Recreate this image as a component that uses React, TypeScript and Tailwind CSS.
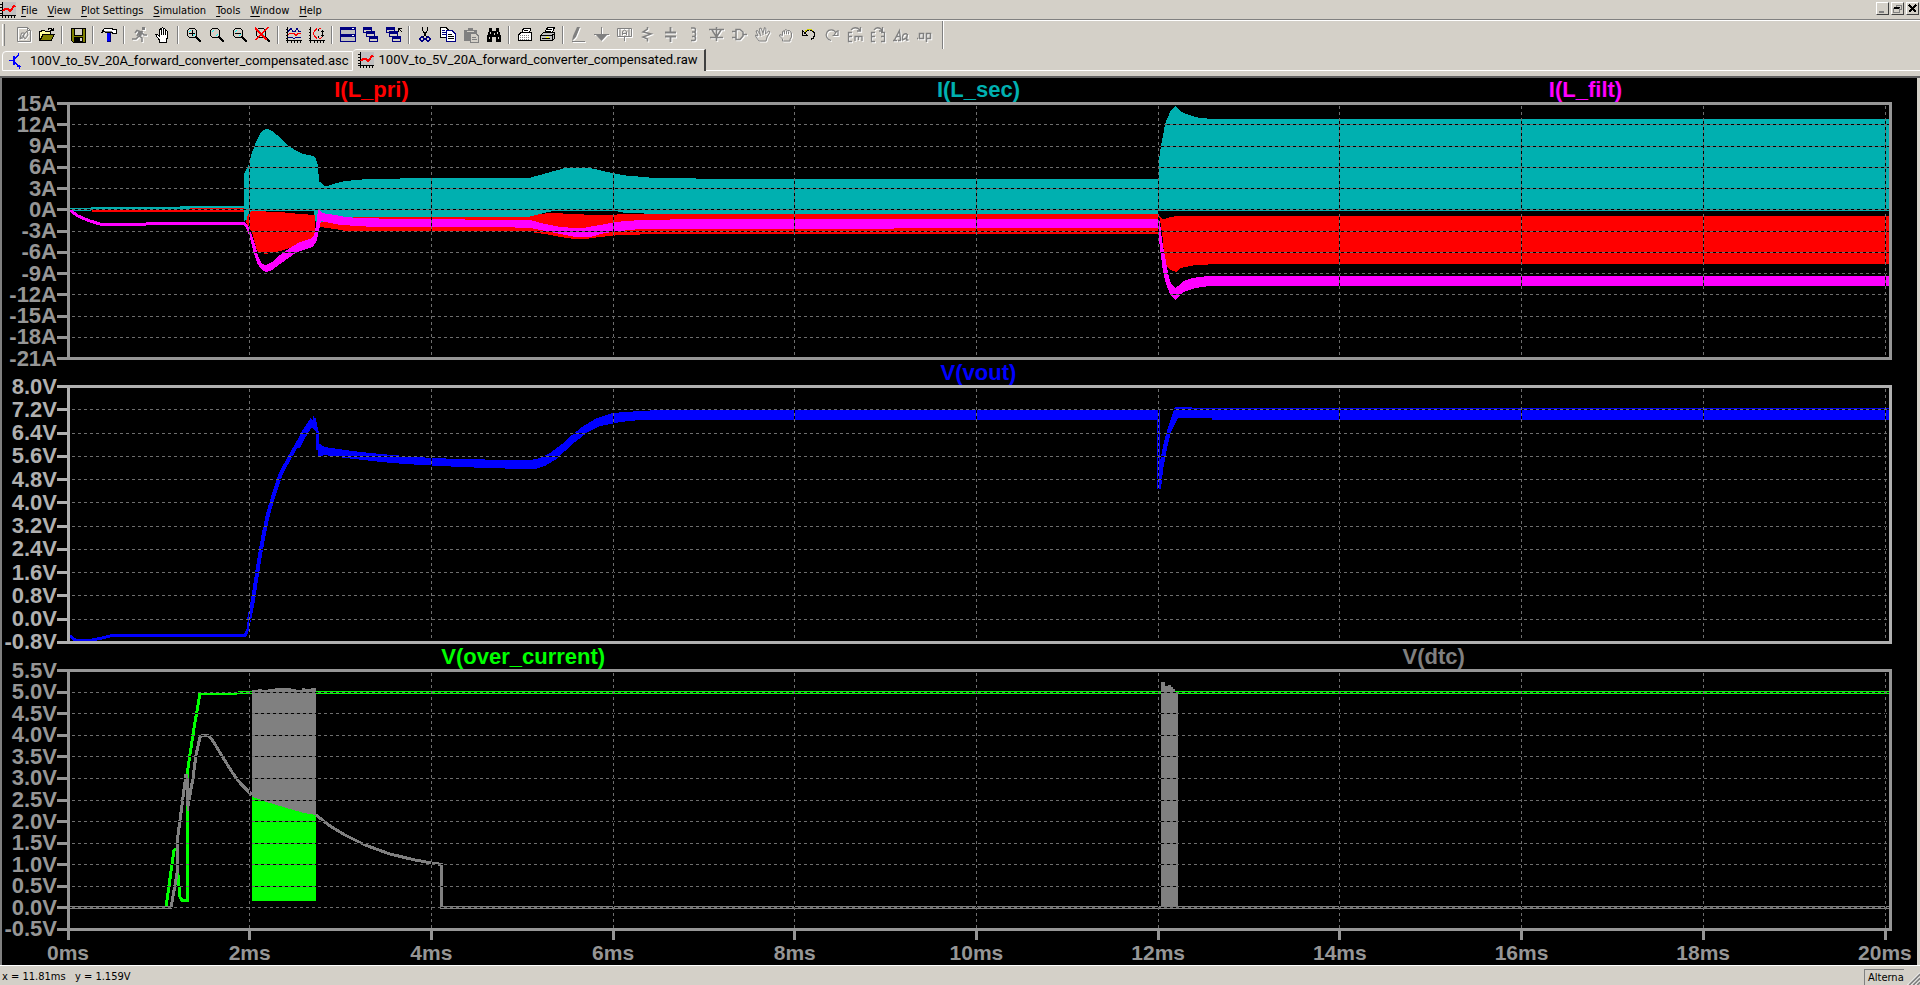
import React from "react";

type Pt = [number, number];

const pts = (list: Pt[]) => list.map(([x, y]) => `${x},${y}`).join(" ");

/* ---------- small drawing helpers ---------- */

function Icon({ children, label }: { children: React.ReactNode; label?: string }) {
  return (
    <svg
      viewBox="0 0 16 16"
      className="h-4 w-4 shrink-0"
      fill="none"
      shapeRendering="crispEdges"
      aria-hidden={label ? undefined : true}
      aria-label={label}
    >
      {children}
    </svg>
  );
}

/* Greyed-out glyph with the white engraved edge of a disabled toolbar button. */
function Engraved({ d, fill, width = 1 }: { d: string; fill?: string; width?: number }) {
  return (
    <svg viewBox="0 0 16 16" className="h-4 w-4 shrink-0 overflow-visible" fill="none" aria-hidden>
      <g transform="translate(1 1)" stroke="#fff" strokeWidth={width}>
        <path d={d} />
        {fill && <path d={fill} fill="#fff" stroke="none" />}
      </g>
      <g stroke="#808080" strokeWidth={width}>
        <path d={d} />
        {fill && <path d={fill} fill="#808080" stroke="none" />}
      </g>
    </svg>
  );
}

function WaveIcon() {
  return (
    <Icon>
      <rect x="2" y="0" width="14" height="13" fill="#c0c0c0" />
      <path d="M2.500 0V16M0 13.500H16M0 2.500H2M0 5.500H2M0 8.500H2M0 11.500H2M5.500 14V16M8.500 14V16M11.500 14V16M14.500 14V16" stroke="#000" />
      <path d="M3 9L5 6.500H8L10 9L12 7L13 4.500L15.500 3.500" stroke="#f00" strokeWidth="2" />
    </Icon>
  );
}

function TransistorIcon() {
  return (
    <Icon>
      <path d="M0 7.500H4" stroke="#00f" />
      <path d="M5 3V12" stroke="#00f" strokeWidth="2" />
      <path d="M6 5.500L9.500 2V0M6 9.500L10.500 14M10.500 11.500V15.500M8 13.500H12" stroke="#00f" />
    </Icon>
  );
}

function Lens({ children }: { children?: React.ReactNode }) {
  return (
    <Icon>
      <path d="M10 10L15 15" stroke="#000" strokeWidth="2.400" />
      <circle cx="6" cy="6" r="5" fill="#d4d0c8" stroke="#000" />
      <path d="M3 5L5 3M7 9L9 7" stroke="#0ff" />
      {children}
    </Icon>
  );
}

function Windows({ arrow }: { arrow?: boolean }) {
  const box = (x: number, y: number) => (
    <g key={x}>
      <rect x={x + 0.5} y={y + 0.5} width="8" height="5" fill="#d4d0c8" stroke="#000080" />
      <rect x={x} y={y} width="9" height="3" fill="#000080" />
    </g>
  );
  return (
    <Icon>
      {box(0, 0)}
      {box(3, 4)}
      {box(6, 9)}
      {arrow && <path d="M12.500 5V1.500H16M12 1L16 5" stroke="#000" />}
    </Icon>
  );
}

/* ---------- toolbar ---------- */

type Tool = { name: string; off?: boolean; icon: React.ReactNode } | "sep";

const tools: Tool[] = [
  {
    name: "New Schematic",
    off: true,
    icon: <Engraved d="M1.500 .5H11.500L14.500 3.500V14.500H1.500ZM11.500 .5V3.500H14.500M4 11.500L5.500 6H8.500L7 11ZM4 12L11 4L12 8L9 12L7 8" />,
  },
  {
    name: "Open",
    icon: (
      <Icon>
        <path d="M0.500 13.500V4.500H2L3 3.500H5.500L6.500 4.500H11.500V7" fill="#ff9" stroke="#000" />
        <path d="M1 13.500L4 7.500H15.500L12 13.500Z" fill="#808000" stroke="#000" />
        <path d="M9 2.500C10 0.500 12 0.500 13.500 3M14.500 0.500V4M11 3.500H15" stroke="#000" />
      </Icon>
    ),
  },
  "sep",
  {
    name: "Save",
    icon: (
      <Icon>
        <path d="M1 1H15V15H3L1 13Z" fill="#808000" stroke="#000" />
        <rect x="4" y="1" width="8" height="7" fill="#d4d0c8" stroke="#000" />
        <rect x="4" y="10" width="9" height="5" fill="#000" />
        <rect x="10" y="11" width="2" height="3" fill="#d4d0c8" />
      </Icon>
    ),
  },
  "sep",
  {
    name: "Control Panel",
    icon: (
      <Icon>
        <path d="M8 6V15" stroke="#00f" strokeWidth="4" />
        <path d="M9.500 6V15M6 14.500H10" stroke="#000080" />
        <path d="M.5 5.500L3.500 1.500H10.500L12.500 2.500H15.500V6.500H12.500L10.500 5.500H5.500L3.500 4.500Z" fill="#fff" stroke="#000" />
        <path d="M4 4.500H11" stroke="#808080" />
      </Icon>
    ),
  },
  "sep",
  {
    name: "Run",
    off: true,
    icon: (
      <Engraved
        d="M10 4L7 9L10 11V15M8 8L4 12H0M3 6L5 3.500L9 5L12 8H15M7 5L5 9"
        fill="M10 0H13V3H10ZM7 4L11 4L9 10L6 8Z"
        width={1.5}
      />
    ),
  },
  {
    name: "Halt",
    icon: (
      <Icon>
        <path
          d="M4.500 15.500V13L1.500 9.500L1 7.500L2.500 7.500L4.500 9V3L5.500 2L6.500 3V1.500L7.500 .5L8.500 1.500V2.500L9.500 1.500L10.500 2.500V4L11.500 3.500L12.500 4.500V10L11.500 13V15.500Z"
          fill="#fff"
          stroke="#000"
        />
        <path d="M6.500 3V8M8.500 2V8M10.500 4V8" stroke="#000" />
      </Icon>
    ),
  },
  "sep",
  { name: "Zoom In", icon: <Lens><path d="M3 6H9M6 3V9" stroke="#000" /></Lens> },
  { name: "Pan", icon: <Lens /> },
  { name: "Zoom Out", icon: <Lens><path d="M3 6H9" stroke="#000" /></Lens> },
  { name: "Zoom Full Extents", icon: <Lens><path d="M0 1L12 13M13 0L1 13" stroke="#f00" strokeWidth="1.500" /></Lens> },
  "sep",
  {
    name: "Autorange",
    icon: (
      <Icon>
        <path d="M1.500 0V16M0 13.500H16M0 2.500H2M0 5.500H2M0 8.500H2M0 11.500H2M5.500 14V16M8.500 14V16M11.500 14V16M14.500 14V16" stroke="#000" />
        <path d="M2 4.500L5 1.500L7 4.500H9L11 1L13 4.500H15M2 10.500H6L8 11.500L10 10.500H15" stroke="#000080" />
        <path d="M2 7.500L4 6.500H8L10 8.500L12 6.500H15" stroke="#f00" />
      </Icon>
    ),
  },
  {
    name: "Zoom Axis",
    icon: (
      <Icon>
        <path d="M1.500 0V16M0 13.500H16M0 2.500H2M0 5.500H2M0 8.500H2M0 11.500H2M5.500 14V16M8.500 14V16M11.500 14V16M14.500 14V16" stroke="#000" />
        <path d="M13.500 3V10M12 4.500H15M12 8.500H15M9.500 2V4M9.500 9V11" stroke="#000" />
        <path d="M8 1.500L5.500 4L4.500 6.500L5.500 9L8 11.500M10 1.500H11.500L12.500 2.500M10 11.500H11.500L12.500 10.500" stroke="#f00" />
      </Icon>
    ),
  },
  "sep",
  {
    name: "Tile",
    icon: (
      <Icon>
        <rect x="0.500" y="0.500" width="15" height="14" fill="#c0c0c0" stroke="#000080" />
        <path d="M0 1.500H16M0 8.500H16" stroke="#000080" strokeWidth="3" />
        <path d="M12 1.500H14M12 8.500H14" stroke="#fff" />
      </Icon>
    ),
  },
  { name: "Cascade", icon: <Windows /> },
  { name: "Close All", icon: <Windows arrow /> },
  "sep",
  {
    name: "Cut",
    icon: (
      <Icon>
        <path d="M5.500 0V3L9.500 10M10.500 0V3L6.500 10" stroke="#000" strokeWidth="1.200" />
        <circle cx="5" cy="12" r="2" stroke="#000080" strokeWidth="1.300" />
        <circle cx="11" cy="12" r="2" stroke="#000080" strokeWidth="1.300" />
      </Icon>
    ),
  },
  {
    name: "Copy",
    icon: (
      <Icon>
        <path d="M0.500 0.500H6L8.500 3V10.500H0.500Z" fill="#fff" stroke="#000" />
        <path d="M2 3.500H5M2 5.500H6M2 7.500H6" stroke="#000080" />
        <path d="M6.500 3.500H12L15.500 7V14.500H6.500Z" fill="#fff" stroke="#000080" />
        <path d="M8 7.500H12M8 9.500H14M8 11.500H14" stroke="#000" />
      </Icon>
    ),
  },
  {
    name: "Paste",
    off: true,
    icon: (
      <Icon>
        <path d="M1 3H5V1H10V3H14V14H1Z" fill="#808080" />
        <path d="M4 4.500H11" stroke="#d4d0c8" />
        <path d="M7.500 6.500H13L15.500 9V15.500H7.500Z" fill="#d4d0c8" stroke="#808080" />
        <path d="M9 10.500H13M9 12.500H14" stroke="#808080" />
      </Icon>
    ),
  },
  {
    name: "Find",
    icon: (
      <Icon>
        <path d="M3 1H6V4H10V1H13V4L15 9V15H10V10H6V15H1V9L3 4Z" fill="#000" />
        <path d="M4.500 5V7M11.500 5V7M3.500 10V12M12.500 10V12M8 6V8" stroke="#d4d0c8" />
      </Icon>
    ),
  },
  "sep",
  {
    name: "Print Setup",
    icon: (
      <Icon>
        <path d="M4.500 6L6.500 1.500H13.500L12.500 6" fill="#fff" stroke="#000" />
        <path d="M1.500 8L4 5.500H14.500V13.500H1.500Z" fill="#fff" stroke="#000" />
        <path d="M3 8.500H13M3 10.500H13M3 12.500H13" stroke="#808080" strokeDasharray="1 1" />
        <path d="M7 3.500H11" stroke="#000" />
      </Icon>
    ),
  },
  {
    name: "Print",
    icon: (
      <Icon>
        <path d="M4.500 6L7.500 .5H14.500L12.500 5" fill="#fff" stroke="#000" />
        <path d="M7 2.500H12M6 4.500H11" stroke="#000" />
        <path d="M.5 8.500L3.500 5.500H14.500V11.500L12.500 13.500H.5Z" fill="#c0c0c0" stroke="#000" />
        <path d="M1 8.500H12L15 6M12.500 9V13M2 11.500H10" stroke="#000" />
        <path d="M6 10.500H9" stroke="#ff0" />
      </Icon>
    ),
  },
  "sep",
  { name: "Wire", off: true, icon: <Engraved d="M1 14.500H14M2.500 12L7.500 2" fill="M6 0H9L5 10L1 14L2 9Z" /> },
  { name: "Ground", off: true, icon: <Engraved d="M7.500 0V7M0 7.500H15" fill="M1 7H14L7.500 14Z" /> },
  { name: "Label Net", off: true, icon: <Engraved d="M.5 1.500H14.500V9.500H.5ZM7.500 10V14M5.500 8V4.500L7.500 3L9.500 4.500V8M5.500 6.500H9.500M3 9V2M12 9V2" /> },
  { name: "Resistor", off: true, icon: <Engraved d="M7.500 0V2L3 5L11 7L3 10L7.500 12V14.500" width={1.5} /> },
  { name: "Capacitor", off: true, icon: <Engraved d="M7.500 0V5M7.500 10V15M2 5.500H13M2 9.500H13" width={1.8} /> },
  { name: "Inductor", off: true, icon: <Engraved d="M5 1H8C10 1 10 5 8 5H6M8 5C10 5 10 9.500 8 9.500H6M8 9.500C10 9.500 10 13.500 8 13.500H5" width={1.5} /> },
  { name: "Diode", off: true, icon: <Engraved d="M7.500 0V14M0 2.500H15M1 10.500H14M3 3L7.500 10L12 3" width={1.5} /> },
  { name: "Component", off: true, icon: <Engraved d="M4 2.500H8L11 5V9L8 12.500H4ZM0 4.500H4M0 10.500H4M11 7.500H15" width={1.5} /> },
  {
    name: "Move",
    off: true,
    icon: <Engraved d="M4 14L1 10L.5 8L3 9L1 4L2.500 3.500L5 7L4.500 1.500L6 1L8 6L9.500 .5L11 1.500L10.500 7L13.500 4L15 5L12 10L11 14ZM5 7L6 9M8 6V8" />,
  },
  {
    name: "Drag",
    off: true,
    icon: <Engraved d="M4.500 14V12L1.500 9L2 7.500L4.500 8.500V4.500L6.500 3.500L7.500 2.500L9.500 3.500L11.500 3.500L13.500 6V10L12 12V14ZM6.500 4V7M8.500 4V7M10.500 4.500V7" />,
  },
  {
    name: "Undo",
    icon: (
      <Icon>
        <path d="M3 6.500C5 2.500 10 1.500 12.500 4.500C15 8 13 11.500 10 12.500" stroke="#000" strokeWidth="1.300" />
        <path d="M4 4.500C6 2 10 1.500 12 4" stroke="#cc0" />
        <path d="M1.500 3V8.500H7M2 4L6 8" stroke="#000" strokeWidth="1.300" />
      </Icon>
    ),
  },
  { name: "Redo", off: true, icon: <Engraved d="M12 6C10 2 5 2 3 5C1 9 3 12 7 13.500M14 3V8.500H8.500M13 4L10 8" width={1.2} /> },
  { name: "Rotate", off: true, icon: <Engraved d="M5 5.500H1.500V14.500H5M1.500 9.500H5M8 14V9.500H15V14M11.500 10V13M4 3C6 0 10 0 13 3M13.500 0V4H10" width={1.3} /> },
  { name: "Mirror", off: true, icon: <Engraved d="M5 5.500H1.500V14.500H5M1.500 9.500H5M11 5.500H14.500V14.500H11M14.500 9.500H11M4 3C6 0 9 0 12 3M12.500 0V4H9" width={1.3} /> },
  { name: "Text", off: true, icon: <Engraved d="M0 13.500H4M5 13.500H8M1.500 13L6.500 3.500L7.500 13M3 9.500H7M14 7C10 6 9 9 9.500 13L13.500 11L14.500 7L13.500 13H15.500" width={1.4} /> },
  { name: "SPICE Directive", off: true, icon: <Engraved d="M1 11.500H2M3.500 6.500H7.500V11.500H3.500ZM10.500 15V6.500H14.500V11.500H10.500" width={1.5} /> },
];

function Toolbar() {
  return (
    <div role="toolbar" aria-label="Main" className="flex h-7 items-stretch">
      <div className="mt-[3px] mr-[7px] ml-0.5 h-[22px] w-[3px] border-r border-l border-r-[#808080] border-l-white" />
      {tools.map((t, i) =>
        t === "sep" ? (
          <div key={i} className="flex w-2 items-center justify-center">
            <div className="h-[18px] w-0.5 border-r border-l border-r-white border-l-[#808080]" />
          </div>
        ) : (
          <button
            key={i}
            type="button"
            aria-label={t.name}
            title={t.name}
            disabled={t.off}
            className="flex w-[23px] items-center justify-center"
          >
            {t.icon}
          </button>
        ),
      )}
      <div className="ml-[7px] w-0.5 border-r border-l border-r-white border-l-[#808080]" />
    </div>
  );
}

/* ---------- menu, tabs ---------- */

const menus = ["File", "View", "Plot Settings", "Simulation", "Tools", "Window", "Help"];

function CaptionButton({ label, children }: { label: string; children: React.ReactNode }) {
  return (
    <button
      type="button"
      aria-label={label}
      className="flex h-[13px] w-[13px] items-center justify-center border border-t-white border-r-[#404040] border-b-[#404040] border-l-white bg-[#d4d0c8]"
    >
      <svg viewBox="0 0 9 9" className="h-[9px] w-[9px]" fill="none" shapeRendering="crispEdges" aria-hidden>
        {children}
      </svg>
    </button>
  );
}

function MenuBar() {
  return (
    <header className="flex h-5 items-center border-b border-[#808080] text-[11px] leading-4">
      <WaveIcon />
      <nav className="ml-[5px] flex gap-2.5">
        {menus.map((m) => (
          <button key={m} type="button" className="pt-0.5 whitespace-nowrap">
            <span className="underline underline-offset-2">{m[0]}</span>
            {m.slice(1)}
          </button>
        ))}
      </nav>
      <div className="mr-px ml-auto flex gap-0.5 self-start pt-0.5">
        <CaptionButton label="Minimize">
          <path d="M1 8H6" stroke="#808080" strokeWidth="2" />
        </CaptionButton>
        <CaptionButton label="Restore">
          <path d="M3.500 3V1.500H8.500V5.500H7" stroke="#808080" />
          <path d="M.5 4H6.500" stroke="#000" strokeWidth="2" />
          <path d="M.5 4V8.500H6.500V4" stroke="#808080" />
        </CaptionButton>
        <CaptionButton label="Close">
          <path d="M1 1L8 8M8 1L1 8" stroke="#000" strokeWidth="1.600" />
        </CaptionButton>
      </div>
    </header>
  );
}

function Tabs() {
  return (
    <div role="tablist" className="flex h-[22px] items-end text-[13px] leading-4 [font-family:Roboto,sans-serif]">
      <button
        type="button"
        role="tab"
        aria-selected="false"
        className="ml-0.5 flex h-5 items-center rounded-tl-sm border border-white pr-[3px] pl-1.5 whitespace-nowrap"
      >
        <TransistorIcon />
        <span className="ml-[5px]">100V_to_5V_20A_forward_converter_compensated.asc</span>
      </button>
      <button
        type="button"
        role="tab"
        aria-selected="true"
        className="flex h-[22px] items-center rounded-tl-sm border-t border-r-2 border-t-white border-r-[#404040] pb-0.5 pl-[5px] pr-1.5 whitespace-nowrap"
      >
        <WaveIcon />
        <span className="ml-[5px]">100V_to_5V_20A_forward_converter_compensated.raw</span>
      </button>
      <div className="flex-1 border-b border-white" />
    </div>
  );
}

/* ---------- plot panes ---------- */

const LEFT = 68.5;
const MS = 90.85;
const RIGHT = 1890.5;
const timeTicks = Array.from({ length: 11 }, (_, i) => i * 2);
const snap = (v: number) => Math.floor(v) + 0.5;

interface PaneProps {
  name: string;
  legend: { text: string; tone: string }[];
  labels: string[];
  top: number;
  bottom: number;
  frame: string;
  tone: string;
  size: string;
  timeAxis?: boolean;
  children: React.ReactNode;
}

function Pane({ name, legend, labels, top, bottom, frame, tone, size, timeAxis, children }: PaneProps) {
  const rows = labels.map((_, i) => snap(top + ((bottom - top) * i) / (labels.length - 1)));
  const y0 = top - 1.5;
  const height = bottom - top + (timeAxis ? 12 : 3);
  return (
    <section aria-label={name} className={`flex min-h-0 flex-col ${size}`}>
      <div className="flex h-6 shrink-0 items-center pr-7 pl-[66px]">
        {legend.map((l) => (
          <button key={l.text} type="button" className={`flex-1 text-center leading-6 font-bold ${l.tone}`}>
            {l.text}
          </button>
        ))}
      </div>
      <div className="flex min-h-0 flex-1">
        <ul className={`flex w-[55px] shrink-0 flex-col items-end justify-between pt-px ${timeAxis ? "pb-[11px]" : "pb-0.5"} ${tone}`}>
          {labels.map((l) => (
            <li key={l} className="flex h-0 items-center whitespace-nowrap">
              {l}
            </li>
          ))}
        </ul>
        <svg
          viewBox={`57 ${y0} 1835 ${height}`}
          preserveAspectRatio="none"
          className="mr-[25px] h-full w-0 min-w-0 flex-1"
          fill="none"
          shapeRendering="crispEdges"
          role="img"
          aria-label={`${name} against time`}
        >
          {children}
          {rows.slice(1, -1).map((y) => (
            <g key={y}>
              <path d={`M70 ${y}H1889`} stroke="#000" />
              <path d={`M72 ${y}H1889`} stroke="#6e6e6e" strokeDasharray="3 3" />
            </g>
          ))}
          {timeTicks.slice(1).map((t) => {
            const x = snap(LEFT + t * MS - 0.4);
            return (
              <g key={t}>
                <path d={`M${x} ${top + 2}V${bottom - 1}`} stroke="#000" />
                <path d={`M${x} ${top + 2}V${bottom - 1}`} stroke="#6e6e6e" strokeDasharray="3 3" />
              </g>
            );
          })}
          <g stroke={frame} strokeWidth="3">
            <rect x={LEFT} y={top} width={RIGHT - LEFT} height={bottom - top} />
            {rows.map((y) => (
              <path key={y} d={`M57 ${y}H68`} />
            ))}
            {timeAxis && timeTicks.map((t) => <path key={t} d={`M${snap(LEFT + t * MS - 0.4)} ${bottom}V${bottom + 10}`} />)}
          </g>
        </svg>
      </div>
    </section>
  );
}

const secondary: Pt[] = [
  [244, 174], [247, 168], [250, 162], [251, 155], [254, 148], [256, 142], [259, 136], [262, 131], [265, 129.5],
  [268, 129], [272, 131], [277, 135], [283, 141], [290, 147], [297, 151], [303, 154], [313, 156], [316, 159],
  [318, 166], [319, 182], [322, 183], [324, 186], [327, 186], [333, 184], [343, 181.5], [355, 180], [369, 179],
  [431, 178], [529, 178], [547, 173], [565, 168], [590, 168], [612, 173], [626, 175.5], [655, 178], [696, 178.5],
  [720, 179], [1158, 179], [1159, 160], [1161, 145], [1163, 136], [1165, 124], [1168, 117], [1171, 110],
  [1174, 107], [1176, 106], [1179, 110], [1184, 113], [1192, 116], [1200, 118], [1214, 119], [1889, 119],
  [1889, 211], [1159, 211], [1158, 214], [662, 214], [625, 213], [616, 211], [553, 211], [540, 214], [528, 217],
  [355, 217], [330, 222], [319, 226], [315, 220], [314, 211], [251, 211], [248, 219], [244, 221],
];

const primaryStart: Pt[] = [
  [246, 222], [248, 214], [251, 211], [280, 212], [300, 214], [315, 215], [315, 238], [306, 242], [290, 248],
  [280, 251], [265, 254], [257, 251], [252, 232],
];

const primaryMid: Pt[] = [
  [320, 222], [345, 220], [355, 217], [528, 217], [540, 214], [550, 213], [575, 214], [593, 215], [640, 214],
  [1158, 214], [1158, 234], [640, 234.5], [615, 235.5], [600, 237], [585, 239], [575, 239], [560, 237], [545, 234],
  [530, 232], [369, 232], [345, 231], [335, 229], [320, 227],
];

const primaryEnd: Pt[] = [
  [1159, 215], [1162, 219], [1165, 219], [1170, 217], [1178, 216], [1889, 216], [1889, 264], [1220, 264],
  [1195, 265], [1180, 268], [1176, 272], [1171, 270], [1166, 266], [1164, 256], [1163, 240], [1161, 226],
];

const filter: Pt[] = [
  [244, 222], [248, 226], [251, 232], [255, 244], [258, 256], [262, 264], [266, 265], [272, 262], [280, 255],
  [290, 248], [300, 242], [310, 239], [314, 235], [316, 226], [317, 218], [318, 210], [320, 210], [322, 213],
  [335, 215], [345, 217], [358, 218], [400, 219], [530, 220], [545, 224], [560, 227], [575, 228], [583, 228],
  [600, 225], [615, 222], [640, 220], [700, 219], [1158, 219], [1160, 222], [1161, 232], [1163, 246], [1166, 262],
  [1169, 278], [1172, 285], [1175, 288], [1178, 286], [1184, 281], [1192, 278], [1208, 276], [1889, 276],
  [1889, 286], [1210, 286], [1195, 288], [1184, 292], [1178, 297], [1175, 300], [1170, 294], [1166, 284],
  [1163, 272], [1161, 256], [1159, 240], [1158, 228], [640, 229], [620, 231], [605, 233], [590, 237], [575, 237],
  [560, 234], [545, 231], [530, 228], [500, 227], [372, 227], [360, 226], [340, 225], [330, 223], [321, 221],
  [319, 230], [317, 240], [313, 247], [306, 249], [297, 252], [290, 257], [280, 264], [272, 270], [266, 272],
  [262, 270], [257, 263], [253, 250], [250, 238], [246, 228], [244, 225],
];

const vout: Pt[] = [
  [318, 443], [325, 447], [345, 450], [370, 453], [405, 456], [431, 458], [460, 459], [510, 460], [530, 460],
  [540, 458], [550, 453], [562, 444], [572, 435], [582, 427], [595, 419], [612, 413], [640, 411], [660, 410],
  [1157, 410], [1157, 420], [640, 420], [620, 422], [600, 426], [588, 432], [575, 442], [565, 451], [555, 460],
  [545, 466], [535, 469], [525, 469], [485, 468], [440, 466], [405, 464], [381, 462], [345, 458], [325, 455],
  [318, 457],
];

const voutStep: Pt[] = [
  [1159, 489], [1160, 462], [1164, 442], [1168, 427], [1174, 410], [1175, 407], [1192, 407], [1192, 408],
  [1889, 408], [1889, 420], [1212, 420], [1212, 418], [1178, 418], [1171, 432], [1167, 448], [1163, 470],
  [1161, 489],
];

function Plots() {
  return (
    <main className="flex min-h-0 flex-1 flex-col border-r-[3px] border-l-2 border-r-[#d4d0c8] border-l-[#808080] bg-black text-[22px] [font-family:'Liberation_Sans',Arial,sans-serif]">
      <Pane
        name="Inductor currents"
        legend={[
          { text: "I(L_pri)", tone: "text-[#ff0000]" },
          { text: "I(L_sec)", tone: "text-[#00b0b0]" },
          { text: "I(L_filt)", tone: "text-[#ff00ff]" },
        ]}
        labels={["15A", "12A", "9A", "6A", "3A", "0A", "-3A", "-6A", "-9A", "-12A", "-15A", "-18A", "-21A"]}
        top={103.5}
        bottom={358.5}
        frame="#969696"
        tone="font-bold text-[#969696]"
        size="flex-[282]"
      >
        <polyline points="70,209 91,209 115,208 181,208 182,207 245,207" stroke="#00b0b0" strokeWidth="3" />
        <path d="M92 211H245M190 208.500H245" stroke="#f00" strokeWidth="2" />
        <polygon points={pts(secondary)} fill="#00b0b0" />
        <polygon points={pts(primaryStart)} fill="#f00" />
        <polygon points={pts(primaryMid)} fill="#f00" />
        <polygon points={pts(primaryEnd)} fill="#f00" />
        <polyline points="70,210 78,216 90,221 100,224 119,225 135,224.500 157,223.500 245,223.500" stroke="#f0f" strokeWidth="3" />
        <polygon points={pts(filter)} fill="#f0f" />
      </Pane>
      <Pane
        name="Output voltage"
        legend={[{ text: "V(vout)", tone: "text-[#0000ff]" }]}
        labels={["8.0V", "7.2V", "6.4V", "5.6V", "4.8V", "4.0V", "3.2V", "2.4V", "1.6V", "0.8V", "0.0V", "-0.8V"]}
        top={386.5}
        bottom={642.5}
        frame="#b0b0b0"
        tone="font-bold text-[#b0b0b0]"
        size="mt-px flex-[283]"
      >
        <g stroke="#00f">
          <polyline points="70,636 75,640 92,640 102,638 110,636 122,635.500 245,635.500 248,629 250,616" strokeWidth="3" />
          <polyline
            points="249,620 253,600 256,580 260,555 264,533 268,514 274,494 281,473 291,455 299,441 306,430 313,420"
            strokeWidth="4"
            strokeLinejoin="round"
          />
          <polyline points="297,447 305,432 313,420" strokeWidth="6" />
          <polyline points="314,418 317,431 318,450" strokeWidth="3" />
          <path d="M1157.500 410V489M1159.500 410V489" />
        </g>
        <path d="M313 415L316 420L317 432L312 428Z" fill="#00f" />
        <polygon points={pts(vout)} fill="#00f" />
        <polygon points={pts(voutStep)} fill="#00f" />
      </Pane>
      <Pane
        name="Control voltages"
        legend={[
          { text: "V(over_current)", tone: "text-[#00ff00]" },
          { text: "V(dtc)", tone: "text-[#808080]" },
        ]}
        labels={["5.5V", "5.0V", "4.5V", "4.0V", "3.5V", "3.0V", "2.5V", "2.0V", "1.5V", "1.0V", "0.5V", "0.0V", "-0.5V"]}
        top={670.5}
        bottom={929.5}
        frame="#969696"
        tone="font-bold text-[#969696]"
        size="mt-px flex-[295]"
        timeAxis
      >
        <polyline
          points="166,907 174,850 177,849 178,875 180,897 182,900.500 187.500,900.500 187.500,771 194,728 200,693.500 238,693 251,692.500 1889,692.500"
          stroke="#0f0"
          strokeWidth="3"
        />
        <polyline
          points="70,907.500 171,907.500 175,885 177.500,870 178,835 182,805 186,774 188,806 193,778 196,755 200,737 202,735.500 208,735.500 213,741 222,756 232,772 241,784 252,795"
          stroke="#808080"
          strokeWidth="3"
        />
        <path d="M185 774H188L190 792L189 811H187Z" fill="#808080" />
        <path d="M252 690H258V689H262V690H268V689H275V688H291V689H296V690H302V688H305V689H311V688H316V820H252Z" fill="#808080" />
        <path d="M252 797L270 803L290 809L304 813L316 815V901H252Z" fill="#0f0" />
        <polyline
          points="316,815 330,826 345,835 365,845 390,854 415,860 432,863 441.500,864.500 441.500,907.500 1889,907.500"
          stroke="#808080"
          strokeWidth="3"
        />
        <path d="M1161 682H1165V686H1168V685H1171V687H1173V689H1175V693H1178V908H1161Z" fill="#808080" />
      </Pane>
      <ul className="flex h-[25px] shrink-0 items-center justify-between pr-8 pl-[66px] text-[21px] leading-6 font-bold text-[#969696]">
        {timeTicks.map((t) => (
          <li key={t} className="flex w-0 justify-center whitespace-nowrap">
            {t}ms
          </li>
        ))}
      </ul>
    </main>
  );
}

function StatusBar() {
  return (
    <footer className="flex h-5 items-end border-t border-white pl-0.5 text-[11px] leading-4">
      <span className="w-[73px]">x = 11.81ms</span>
      <span>y = 1.159V</span>
      <span className="ml-auto h-4 w-10 overflow-hidden border-t border-l border-[#808080] pl-[3px]">Alterna</span>
      <svg viewBox="0 0 16 16" className="h-4 w-4" fill="none" aria-hidden>
        <path d="M5 16L16 5M9 16L16 9M13 16L16 13" stroke="#808080" strokeWidth="2" />
        <path d="M3.500 16L16 3.500M7.500 16L16 7.500M11.500 16L16 11.500" stroke="#fff" />
      </svg>
    </footer>
  );
}

export default function App() {
  return (
    <div className="flex h-screen flex-col bg-[#d4d0c8] text-black [font-family:'DejaVu_Sans_Condensed','DejaVu_Sans',sans-serif]">
      <MenuBar />
      <div className="border-t border-white">
        <Toolbar />
      </div>
      <Tabs />
      <div className="h-[7px] shrink-0 border-b-2 border-[#606060]" />
      <Plots />
      <StatusBar />
    </div>
  );
}
